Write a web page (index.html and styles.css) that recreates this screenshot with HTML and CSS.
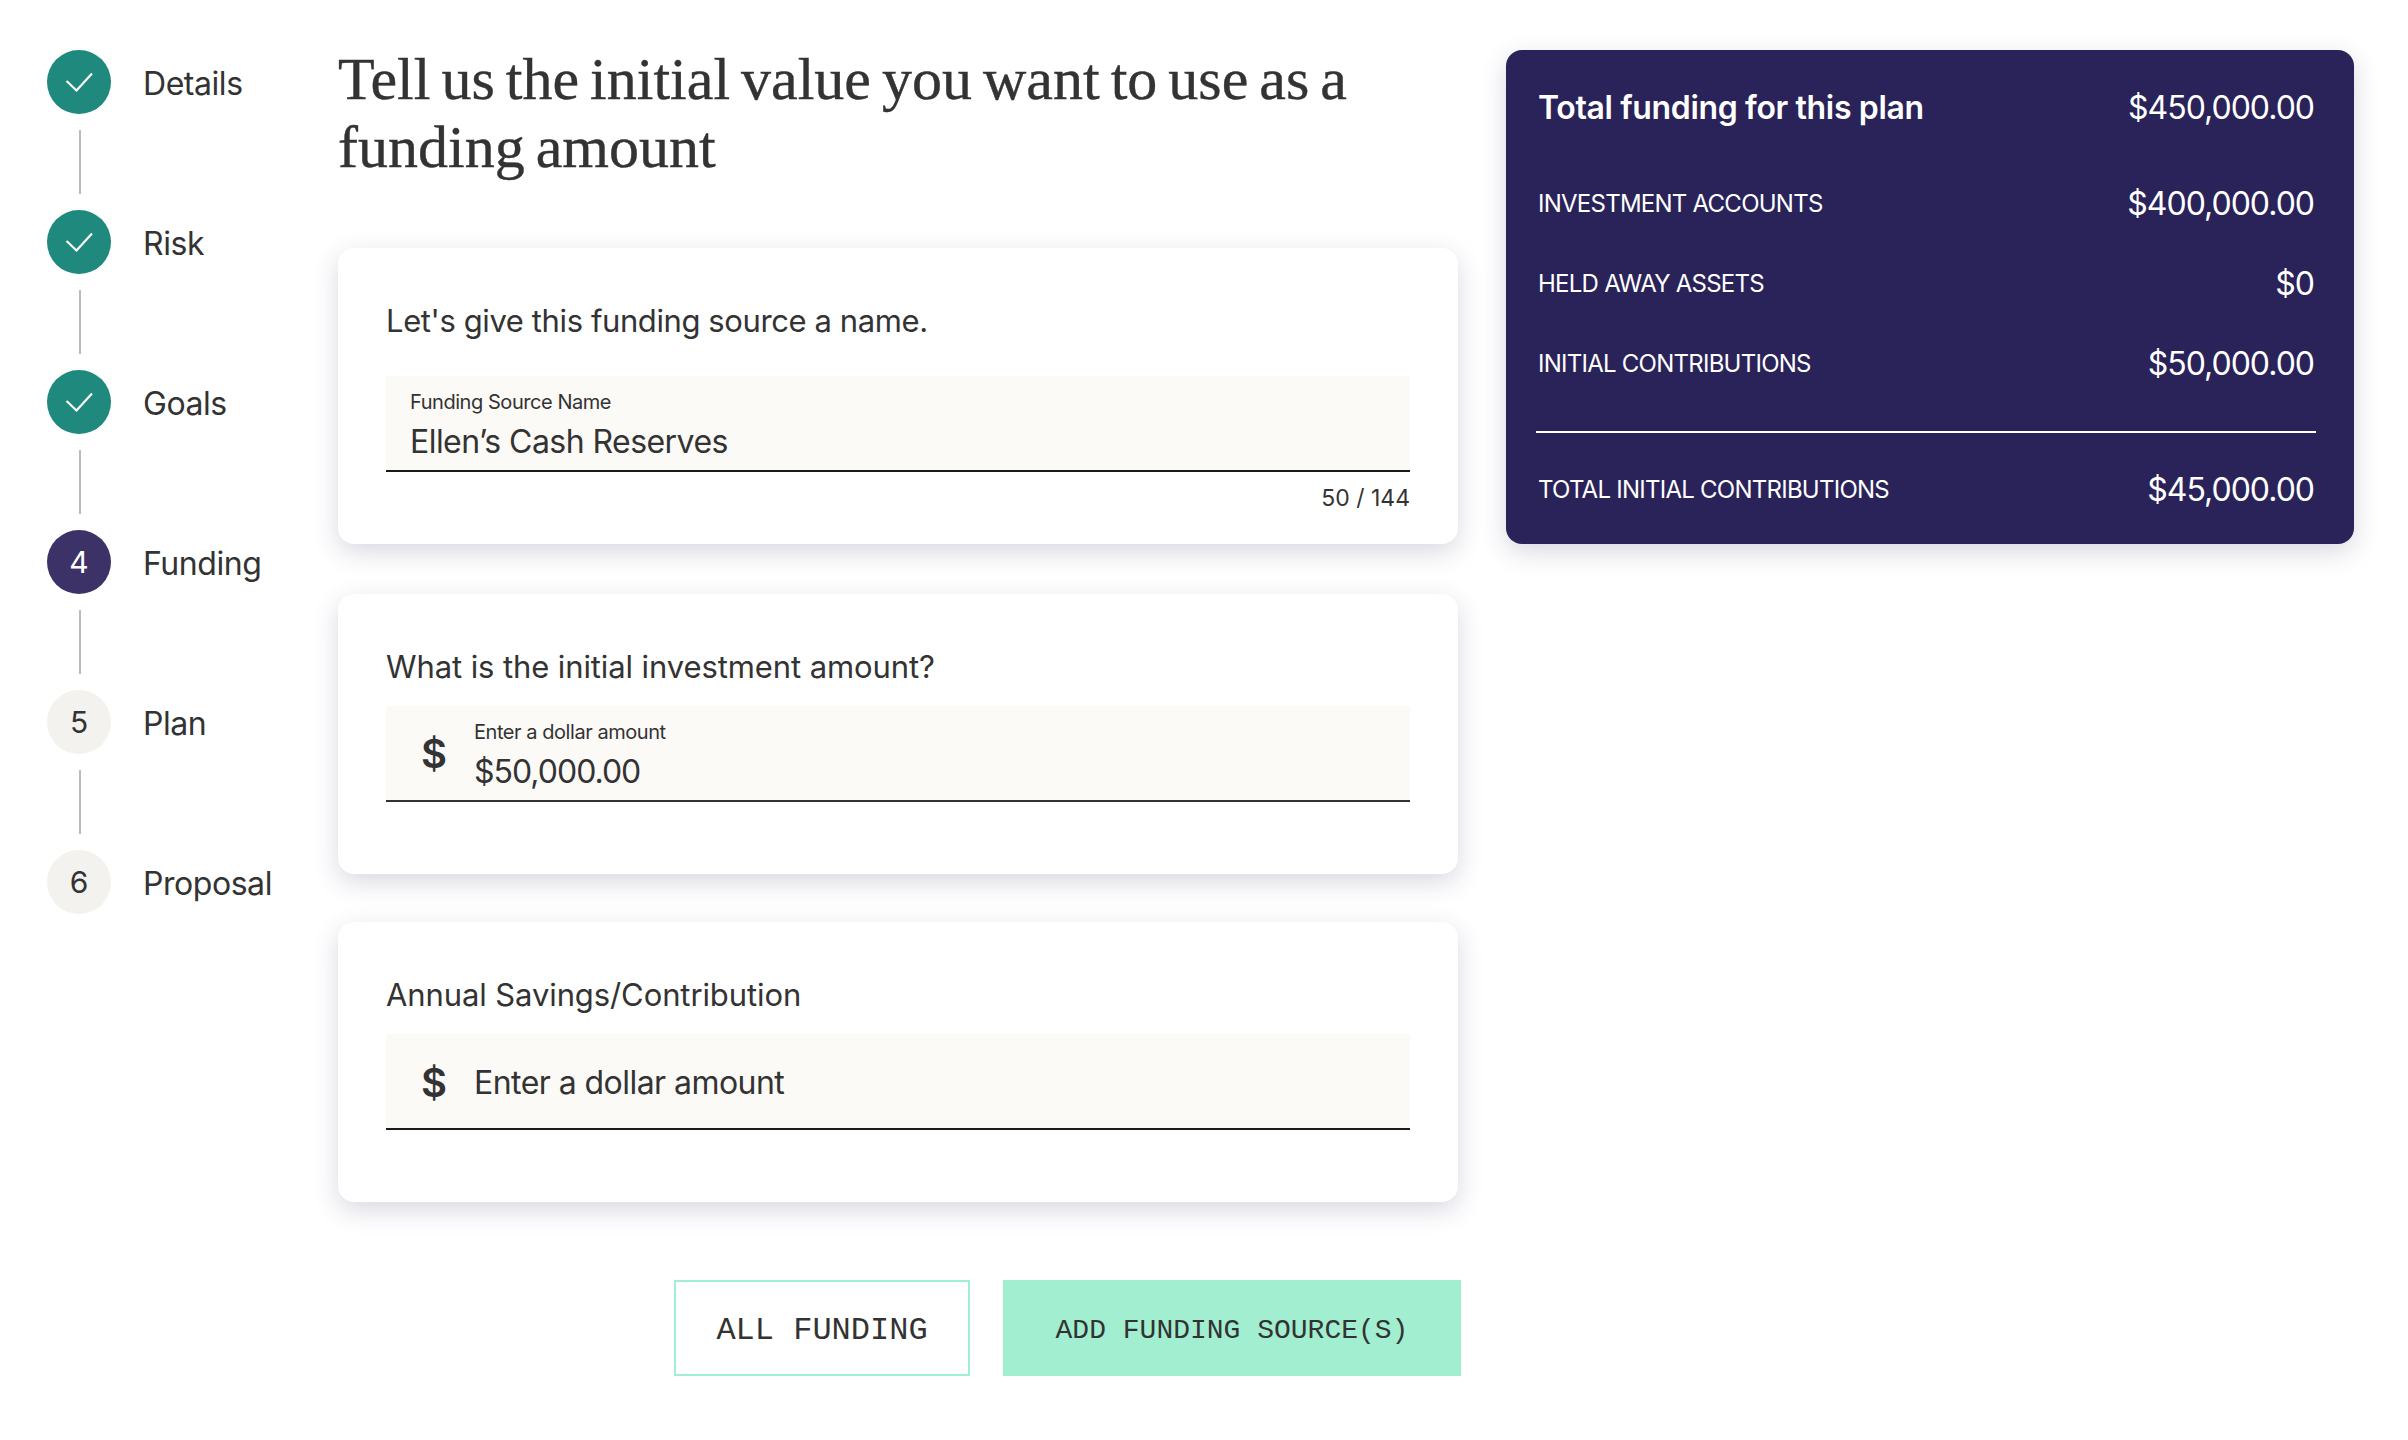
FILE: index.html
```html
<!DOCTYPE html>
<html lang="en">
<head>
    <meta charset="UTF-8">
    <meta name="viewport" content="width=device-width, initial-scale=1.0">
    <title>Funding</title>
    <link rel="stylesheet" href="styles.css">
</head>
<body>
    <div class="page">
        <nav class="steps">
            <div class="step">
                <span class="step-dot done"><svg width="28" height="22" viewBox="0 0 28 22"><path d="M1.500 10l10 9.500L27 2.500" fill="none" stroke="#fff" stroke-width="2.200"/></svg></span>
                <span class="step-label">Details</span>
            </div>
            <div class="step-line"></div>
            <div class="step">
                <span class="step-dot done"><svg width="28" height="22" viewBox="0 0 28 22"><path d="M1.500 10l10 9.500L27 2.500" fill="none" stroke="#fff" stroke-width="2.200"/></svg></span>
                <span class="step-label">Risk</span>
            </div>
            <div class="step-line"></div>
            <div class="step">
                <span class="step-dot done"><svg width="28" height="22" viewBox="0 0 28 22"><path d="M1.500 10l10 9.500L27 2.500" fill="none" stroke="#fff" stroke-width="2.200"/></svg></span>
                <span class="step-label">Goals</span>
            </div>
            <div class="step-line"></div>
            <div class="step">
                <span class="step-dot current">4</span>
                <span class="step-label">Funding</span>
            </div>
            <div class="step-line"></div>
            <div class="step">
                <span class="step-dot">5</span>
                <span class="step-label">Plan</span>
            </div>
            <div class="step-line"></div>
            <div class="step">
                <span class="step-dot">6</span>
                <span class="step-label">Proposal</span>
            </div>
        </nav>

        <main class="main">
            <h1>Tell us the initial value you want to use as a funding amount</h1>

            <section class="card card-name">
                <p class="question">Let's give this funding source a name.</p>
                <div class="field">
                    <div class="field-text">
                        <span class="field-label">Funding Source Name</span>
                        <span class="field-value">Ellen’s Cash Reserves</span>
                    </div>
                </div>
                <div class="counter">50 / 144</div>
            </section>

            <section class="card card-amount">
                <p class="question">What is the initial investment amount?</p>
                <div class="field field-dark">
                    <span class="dollar">$</span>
                    <div class="field-text">
                        <span class="field-label">Enter a dollar amount</span>
                        <span class="field-value field-money">$50,000.00</span>
                    </div>
                </div>
            </section>

            <section class="card card-savings">
                <p class="question">Annual Savings/Contribution</p>
                <div class="field field-empty">
                    <span class="dollar">$</span>
                    <span class="field-value">Enter a dollar amount</span>
                </div>
            </section>

            <div class="actions">
                <button class="btn btn-outline">ALL FUNDING</button>
                <button class="btn btn-solid">ADD FUNDING SOURCE(S)</button>
            </div>
        </main>

        <aside class="summary">
            <div class="summary-row summary-head">
                <span class="summary-title">Total funding for this plan</span>
                <span>$450,000.00</span>
            </div>
            <div class="summary-row">
                <span class="summary-name">INVESTMENT ACCOUNTS</span>
                <span>$400,000.00</span>
            </div>
            <div class="summary-row">
                <span class="summary-name">HELD AWAY ASSETS</span>
                <span>$0</span>
            </div>
            <div class="summary-row">
                <span class="summary-name">INITIAL CONTRIBUTIONS</span>
                <span>$50,000.00</span>
            </div>
            <div class="summary-rule"></div>
            <div class="summary-row">
                <span class="summary-name">TOTAL INITIAL CONTRIBUTIONS</span>
                <span>$45,000.00</span>
            </div>
        </aside>
    </div>
</body>
</html>
```

FILE: styles.css
```css
* {
    box-sizing: border-box;
}
body {
    margin: 0;
    background-color: #fff;
    color: #333;
    font-family: Inter, "Noto Sans", sans-serif;
}
.page {
    display: flex;
    align-items: flex-start;
    padding: 50px 54px 0 47px;
}
.steps {
    width: 291px;
    flex-shrink: 0;
}
.step {
    display: flex;
    align-items: center;
    height: 64px;
}
.step-dot {
    display: flex;
    align-items: center;
    justify-content: center;
    width: 64px;
    height: 64px;
    border-radius: 50%;
    background-color: #f3f2ee;
    font-size: 30px;
}
.step-dot.done {
    background-color: #1f897d;
}
.step-dot.current {
    background-color: #3d3268;
    color: #fff;
}
.step-label {
    margin-left: 32px;
    padding-top: 2px;
    font-size: 32px;
    letter-spacing: -0.45px;
}
.step-line {
    width: 2px;
    height: 64px;
    margin: 16px 0 16px 32px;
    background-color: #bbb;
}
.main {
    width: 1120px;
    flex-shrink: 0;
}
h1 {
    margin: -5px 0 67px;
    font-family: "Liberation Serif", serif;
    font-size: 60px;
    font-weight: 400;
    line-height: 68px;
    word-spacing: -4px;
    -webkit-text-stroke: 0.4px #333;
}
.card {
    background-color: #fff;
    border-radius: 16px;
    padding: 53px 48px 0;
    margin-bottom: 48px;
    box-shadow: 0 8px 26px rgba(42, 36, 90, 0.18);
}
.card-name {
    height: 296px;
    margin-bottom: 50px;
}
.card-amount {
    height: 280px;
}
.card-savings {
    height: 280px;
}
.question {
    margin: 0 0 19px;
    font-size: 31px;
    line-height: 40px;
    letter-spacing: -0.1px;
}
.card-name .question {
    margin-bottom: 35px;
    letter-spacing: -0.4px;
}
.field {
    display: flex;
    align-items: center;
    height: 96px;
    padding: 0 24px;
    background-color: #fbfaf7;
    border-bottom: 2px solid #1a1a1a;
}
.field-dark {
    border-bottom-color: #333;
}
.field-text {
    display: flex;
    flex-direction: column;
    padding-top: 5px;
}
.field-label {
    font-size: 20px;
    line-height: 24px;
    letter-spacing: -0.45px;
}
.field-value {
    margin-top: 8px;
    font-size: 32px;
    line-height: 40px;
    letter-spacing: -0.55px;
}
.field-money {
    letter-spacing: -1px;
}
.field-empty {
    padding-top: 3px;
}
.field-empty .field-value {
    margin-top: 0;
}
.dollar {
    width: 53px;
    margin-left: 11px;
    font-size: 40px;
    font-weight: 600;
}
.counter {
    margin-top: 12px;
    text-align: right;
    font-size: 23px;
    line-height: 28px;
}
.actions {
    display: flex;
    justify-content: flex-end;
    gap: 33px;
    width: 1123px;
    margin-top: 78px;
}
.btn {
    height: 96px;
    padding-top: 5px;
    font-family: "Liberation Mono", monospace;
    color: #333;
    border: 2px solid #a1eed0;
    cursor: pointer;
}
.btn-outline {
    width: 296px;
    font-size: 32px;
    background-color: #fff;
}
.btn-solid {
    width: 458px;
    font-size: 28px;
    background-color: #a1eed0;
}
.summary {
    width: 848px;
    flex-shrink: 0;
    height: 494px;
    margin-left: 48px;
    padding: 15px 40px 0 32px;
    background-color: #2a2359;
    border-radius: 16px;
    color: #fff;
    box-shadow: 0 8px 26px rgba(42, 36, 90, 0.18);
    font-size: 32px;
    letter-spacing: -1px;
}
.summary-row {
    display: flex;
    justify-content: space-between;
    align-items: center;
    height: 80px;
}
.summary-head {
    height: 84px;
    margin-bottom: 14px;
}
.summary-title {
    font-weight: 600;
    letter-spacing: -0.35px;
}
.summary-name {
    font-size: 24px;
    letter-spacing: -0.75px;
}
.summary-rule {
    height: 2px;
    margin: 28px -2px 16px -2px;
    background-color: #fff;
}
```
